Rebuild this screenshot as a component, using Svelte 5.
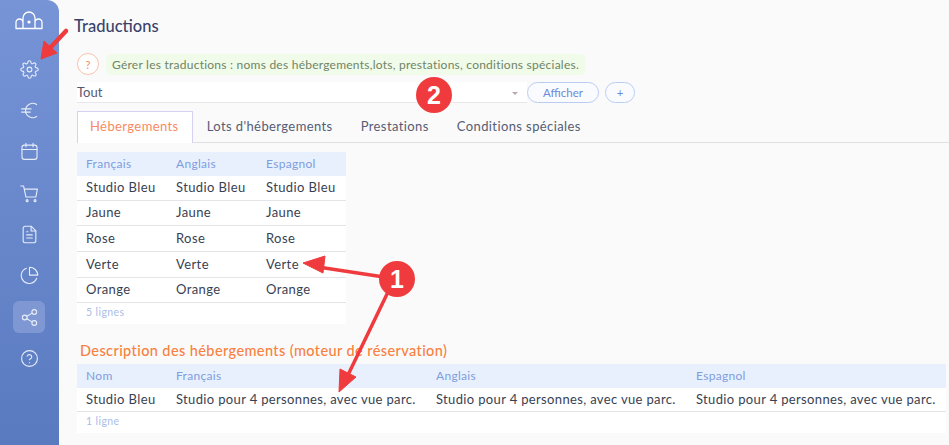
<script>
  const rows = ['Studio Bleu', 'Jaune', 'Rose', 'Verte', 'Orange'];
  const tabs = ['Hébergements', "Lots d'hébergements", 'Prestations', 'Conditions spéciales'];
  const desc = 'Studio pour 4 personnes, avec vue parc.';
</script>

<div class="page">
  <nav class="side">
    <svg class="logo" viewBox="0 0 28 20" width="28" height="20" fill="none" stroke="#fff" stroke-width="1.3">
      <path d="M1 18.500v-6a3.500 3.500 0 0 1 7 0v6M20 18.500v-6a3.500 3.500 0 0 1 7 0v6M8 18.500V8a6 6 0 0 1 12 0v10.500M.5 18.500h27"/>
      <circle cx="14" cy="12" r="1.600" fill="#fff" stroke="none"/>
    </svg>
    <div class="item"><svg viewBox="0 0 24 24"><circle cx="12" cy="12" r="3"/><path d="M19.400 15a1.650 1.650 0 0 0 .33 1.820l.06.06a2 2 0 1 1-2.830 2.830l-.06-.06a1.650 1.650 0 0 0-2.800 1.170V21a2 2 0 0 1-4 0v-.09a1.650 1.650 0 0 0-2.800-1.170l-.06.06a2 2 0 1 1-2.830-2.830l.06-.06a1.650 1.650 0 0 0-1.170-2.800H3a2 2 0 0 1 0-4h.09a1.650 1.650 0 0 0 1.170-2.800l-.06-.06a2 2 0 1 1 2.830-2.830l.06.06a1.650 1.650 0 0 0 2.800-1.170V3a2 2 0 0 1 4 0v.09a1.650 1.650 0 0 0 2.800 1.170l.06-.06a2 2 0 1 1 2.830 2.830l-.06.06a1.650 1.650 0 0 0 1.170 2.800H21a2 2 0 0 1 0 4h-.09a1.650 1.650 0 0 0-1.510 1z"/></svg></div>
    <div class="item"><svg viewBox="0 0 24 24"><path d="M21 4.500A9 9 0 0 0 7 12a9 9 0 0 0 14 7.500M2 10h12M2 14h11"/></svg></div>
    <div class="item"><svg viewBox="0 0 24 24"><rect x="2.500" y="4" width="19" height="18" rx="3"/><path d="M2.500 9.500h19M7.500 1.500v4.500M16.500 1.500v4.500"/></svg></div>
    <div class="item"><svg viewBox="0 0 24 24"><path d="M1 2.500h3.500l3 14h12.500l2-10H5.500"/><circle cx="9" cy="21" r="1.200"/><circle cx="19" cy="21" r="1.200"/></svg></div>
    <div class="item"><svg viewBox="0 0 24 24"><path d="M14 1.500H6.500a2.500 2.500 0 0 0-2.500 2.500v16a2.500 2.500 0 0 0 2.500 2.500h11a2.500 2.500 0 0 0 2.500-2.500V7.500z"/><path d="M14 1.500v6h6M8.500 12.500h7M8.500 16.500h7M8.500 8.500h1.500"/></svg></div>
    <div class="item"><svg viewBox="0 0 24 24"><path d="M21 15.500A10 10 0 1 1 8 2.800"/><path d="M22.500 11.500A10.500 10.500 0 0 0 12 1.500v10z"/></svg></div>
    <div class="item active"><svg viewBox="0 0 24 24"><circle cx="18" cy="5" r="3"/><circle cx="6" cy="12" r="3"/><circle cx="18" cy="19" r="3"/><path d="M8.600 13.500l6.800 4M15.400 6.500l-6.800 4"/></svg></div>
    <div class="item"><svg viewBox="0 0 24 24"><circle cx="12" cy="12" r="10"/><path d="M9.100 9a3 3 0 0 1 5.800 1c0 2-3 2.700-3 3.500M12 17.200v.1"/></svg></div>
  </nav>

  <main class="main">
    <h1>Traductions</h1>
    <div class="help">
      <span class="qmark">?</span>
      <span class="hint">Gérer les traductions : noms des hébergements,lots, prestations, conditions spéciales.</span>
    </div>
    <div class="filter">
      <div class="select">Tout<span class="caret"></span></div>
      <button class="btn wide">Afficher</button>
      <button class="btn">+</button>
    </div>
    <div class="tabs">
      {#each tabs as t, i}
        <span class="tab" class:on={i === 0}>{t}</span>
      {/each}
    </div>

    <div class="card first">
      <table>
        <thead><tr><th class="c90">Français</th><th class="c90">Anglais</th><th>Espagnol</th></tr></thead>
        <tbody>
          {#each rows as r}
            <tr><td>{r}</td><td>{r}</td><td>{r}</td></tr>
          {/each}
        </tbody>
      </table>
      <div class="foot">5 lignes</div>
    </div>

    <h2>Description des hébergements (moteur de réservation)</h2>
    <div class="card second">
      <table>
        <thead><tr><th class="c90">Nom</th><th class="c260">Français</th><th class="c260">Anglais</th><th>Espagnol</th></tr></thead>
        <tbody><tr><td>Studio Bleu</td><td class="long">{desc}</td><td class="long">{desc}</td><td class="long">{desc}</td></tr></tbody>
      </table>
      <div class="foot">1 ligne</div>
    </div>
  </main>

  <svg class="marks" viewBox="0 0 949 445" width="949" height="445">
    <g fill="#ef3b3d" stroke="#ef3b3d" stroke-linejoin="round">
      <path d="M66 31L50 48" stroke-width="4.500" stroke-linecap="round"/>
      <path d="M41 59L44 41L57 53z" stroke-width="1"/>
      <path d="M397 279L318 267" stroke-width="3.500"/>
      <path d="M303 263L325 256L323 273z" stroke-width="1"/>
      <path d="M388 292L347 377" stroke-width="3.500"/>
      <path d="M339 392L340 369L356 377z" stroke-width="1"/>
      <circle cx="397" cy="279" r="18" stroke="none"/>
      <circle cx="434" cy="95" r="18" stroke="none"/>
    </g>
  </svg>
  <span class="num one">1</span>
  <span class="num two">2</span>
</div>

<style>
  :global(body) { margin: 0; }
  .page {
    position: relative;
    display: flex;
    width: 949px;
    height: 445px;
    overflow: hidden;
    background: #fafafa;
    font-family: "Lato", "Noto Sans", sans-serif;
    font-size: 13px;
    color: #3a4158;
  }
  .side {
    flex: 0 0 59px;
    display: flex;
    flex-direction: column;
    align-items: center;
    padding: 10px 1px 0 0;
    box-sizing: border-box;
    background: linear-gradient(180deg, #7694d6 0%, #5a7ac0 100%);
    border-top-right-radius: 12px;
  }
  .logo { margin-bottom: 23px; }
  .item {
    flex: none;
    width: 32px;
    height: 32px;
    margin-bottom: 9.400px;
    display: flex;
    align-items: center;
    justify-content: center;
    border-radius: 6px;
  }
  .item svg {
    width: 19px;
    height: 19px;
    fill: none;
    stroke: #e6ecf8;
    stroke-width: 1.400;
    stroke-linecap: round;
    stroke-linejoin: round;
  }
  .active { background: #7f98d3; }
  .main { flex: 1; min-width: 0; padding: 16px 3px 0 18px; box-sizing: border-box; }
  h1 {
    margin: 0 0 17px -3px;
    font-size: 16.500px;
    line-height: 20px;
    font-weight: 500;
    color: #39436a;
  }
  .help { display: flex; align-items: center; gap: 7px; height: 22px; }
  .qmark {
    width: 20px;
    height: 20px;
    border: 1px solid #f6c4ad;
    border-radius: 50%;
    background: #fff;
    color: #f58a5a;
    font-size: 11px;
    display: flex;
    align-items: center;
    justify-content: center;
  }
  .hint {
    background: #f1fbe9;
    color: #6f8466;
    border-radius: 5px;
    width: 480px;
    box-sizing: border-box;
    height: 21px;
    line-height: 21px;
    padding-left: 6px;
    font-size: 12px;
    letter-spacing: 0.240px;
  }
  .filter { display: flex; align-items: center; margin-top: 7px; height: 21px; }
  .select {
    position: relative;
    width: 450px;
    height: 21px;
    line-height: 20px;
    box-sizing: border-box;
    background: #fff;
    border-bottom: 1px solid #e8e8ea;
    color: #555a70;
  }
  .caret {
    position: absolute;
    right: 9px;
    top: 10px;
    border: 3px solid transparent;
    border-top: 3px solid #b9aaa8;
    border-bottom: 0;
  }
  .btn {
    height: 21px;
    width: 30px;
    padding: 0;
    border: 1px solid #b9cdf3;
    border-radius: 11px;
    background: #fafbff;
    color: #6d8ad6;
    font: inherit;
    font-size: 11.500px;
  }
  .wide { width: 72px; margin-right: 6px; }
  .tabs {
    display: flex;
    height: 31px;
    margin-top: 8px;
    margin-right: -3px;
    border-bottom: 1px solid #e0e0e4;
  }
  .tab {
    padding: 0 13px;
    line-height: 28px;
    height: 31px;
    box-sizing: border-box;
    color: #565c74;
    letter-spacing: 0.400px;
    border: 1px solid transparent;
    border-bottom: 0;
  }
  .tab.on {
    padding: 0 13px 0 12px;
    background: #fff;
    color: #f98a5f;
    border-color: #d6d1f3;
    height: 32px;
  }
  .card { background: #fff; }
  .first { width: 269px; margin-top: 9px; }
  .second { width: 869px; }
  table { border-collapse: separate; border-spacing: 0; width: 100%; table-layout: fixed; }
  th {
    box-sizing: border-box;
    background: #e8f0fe;
    color: #7f9ddd;
    font-weight: 400;
    font-size: 12px;
    letter-spacing: 0.300px;
    text-align: left;
    height: 24px;
    padding: 0 0 2px 9px;
  }
  td {
    box-sizing: border-box;
    height: 25px;
    padding: 0 0 2px 9px;
    border-bottom: 1px solid #e4e4e6;
    white-space: nowrap;
    letter-spacing: 0.400px;
    color: #393f52;
  }
  td.long { letter-spacing: 0.350px; }
  tbody tr:nth-child(3) td, tbody tr:nth-child(4) td { height: 26px; }
  .second td { height: 24px; }
  .c90 { width: 90px; }
  .c260 { width: 260px; }
  .foot {
    height: 21px;
    line-height: 18px;
    padding-left: 9px;
    font-size: 10.500px;
    letter-spacing: 0.400px;
    color: #a9bde9;
  }
  h2 {
    margin: 18px 0 4px 3px;
    height: 18px;
    line-height: 18px;
    font-size: 14.500px;
    font-weight: 500;
    letter-spacing: 0.400px;
    color: #f9803f;
  }
  .marks { position: absolute; left: 0; top: 0; pointer-events: none; }
  .num {
    position: absolute;
    width: 36px;
    text-align: center;
    color: #fff;
    font-family: "Liberation Sans", sans-serif;
    font-size: 25px;
    font-weight: 700;
    line-height: 30px;
  }
  .one { left: 379px; top: 264px; }
  .two { left: 416px; top: 80px; }
</style>
